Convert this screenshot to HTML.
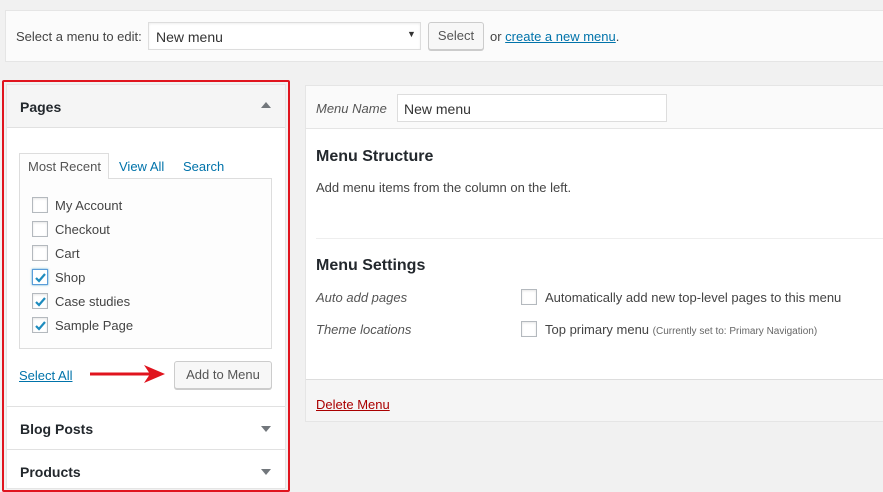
<!DOCTYPE html>
<html><head><style>
*{box-sizing:border-box;margin:0;padding:0}
body{width:883px;height:492px;background:#f1f1f1;font-family:"Liberation Sans",sans-serif;font-size:13px;color:#444;position:relative;overflow:hidden}
.a{position:absolute}
.cb{position:absolute;width:16px;height:16px;border:1px solid #b4b9be;background:#fff;box-shadow:inset 0 1px 2px rgba(0,0,0,.1)}
.cb svg{position:absolute;left:1px;top:1px}
.lbl{position:absolute;font-size:13px;color:#444}
a{color:#0073aa}
</style></head><body>
<div class="a" style="left:5px;top:10px;width:880px;height:52px;background:#fbfbfb;border:1px solid #e5e5e5"></div>
<div class="a" style="left:16px;top:29px">Select a menu to edit:</div>
<div class="a" style="left:148px;top:22px;width:273px;height:28px;background:#fff;border:1px solid #ddd;box-shadow:inset 0 1px 2px rgba(0,0,0,.07)"><span class="a" style="left:7px;top:6px;font-size:14px;color:#333">New menu</span><span class="a" style="left:258px;top:6px;font-size:9px;color:#333">▼</span></div>
<div class="a" style="left:428px;top:22px;width:56px;height:28px;background:#f7f7f7;border:1px solid #ccc;border-radius:3px;box-shadow:0 1px 0 #ccc;text-align:center;line-height:26px;color:#555">Select</div>
<div class="a" style="left:490px;top:29px">or <a href="#">create a new menu</a>.</div>

<div class="a" style="left:2px;top:80px;width:288px;height:412px;border:2px solid #e0141e;border-radius:2px"></div>
<div class="a" style="left:6px;top:84px;width:280px;height:405px;background:#fff;border:1px solid #e5e5e5"></div>
<div class="a" style="left:7px;top:85px;width:278px;height:43px;background:#f5f5f5;border-bottom:1px solid #e1e1e1"></div>
<div class="a" style="left:20px;top:99px;font-size:14px;font-weight:bold;color:#23282d">Pages</div>
<div class="a" style="left:261px;top:102px;width:0;height:0;border-left:5px solid transparent;border-right:5px solid transparent;border-bottom:6px solid #72777c"></div>

<div class="a" style="left:19px;top:178px;width:253px;height:171px;border:1px solid #ddd;background:#fdfdfd"></div>
<div class="a" style="left:19px;top:153px;width:90px;height:26px;border:1px solid #ddd;border-bottom:none;background:#fdfdfd"></div>
<div class="a" style="left:28px;top:159px;color:#555">Most Recent</div>
<div class="a" style="left:119px;top:159px;color:#0073aa">View All</div>
<div class="a" style="left:183px;top:159px;color:#0073aa">Search</div>

<div class="cb" style="left:32px;top:197px"></div><div class="lbl" style="left:55px;top:198px">My Account</div>
<div class="cb" style="left:32px;top:221px"></div><div class="lbl" style="left:55px;top:222px">Checkout</div>
<div class="cb" style="left:32px;top:245px"></div><div class="lbl" style="left:55px;top:246px">Cart</div>
<div class="cb" style="left:32px;top:269px;border-color:#5b9dd9;box-shadow:0 0 2px rgba(30,140,190,.8)"><svg width="13" height="13" viewBox="0 0 13 13"><path d="M2 7l3 3 6-7" stroke="#1e8cbe" stroke-width="2.2" fill="none"/></svg></div><div class="lbl" style="left:55px;top:270px">Shop</div>
<div class="cb" style="left:32px;top:293px"><svg width="13" height="13" viewBox="0 0 13 13"><path d="M2 7l3 3 6-7" stroke="#1e8cbe" stroke-width="2.2" fill="none"/></svg></div><div class="lbl" style="left:55px;top:294px">Case studies</div>
<div class="cb" style="left:32px;top:317px"><svg width="13" height="13" viewBox="0 0 13 13"><path d="M2 7l3 3 6-7" stroke="#1e8cbe" stroke-width="2.2" fill="none"/></svg></div><div class="lbl" style="left:55px;top:318px">Sample Page</div>

<div class="a" style="left:19px;top:368px"><a href="#">Select All</a></div>
<svg class="a" style="left:88px;top:364px" width="80" height="20"><line x1="2" y1="10" x2="62" y2="10" stroke="#e0141e" stroke-width="3"/><path d="M56 1L77 10L56 19L62 10Z" fill="#e0141e"/></svg>
<div class="a" style="left:174px;top:361px;width:98px;height:28px;background:#f7f7f7;border:1px solid #ccc;border-radius:3px;box-shadow:0 1px 0 #ccc;text-align:center;line-height:26px;color:#555">Add to Menu</div>

<div class="a" style="left:7px;top:406px;width:278px;border-top:1px solid #e1e1e1"></div>
<div class="a" style="left:20px;top:421px;font-size:14px;font-weight:bold;color:#23282d">Blog Posts</div>
<div class="a" style="left:261px;top:426px;border-left:5px solid transparent;border-right:5px solid transparent;border-top:6px solid #72777c"></div>
<div class="a" style="left:7px;top:449px;width:278px;border-top:1px solid #e1e1e1"></div>
<div class="a" style="left:20px;top:464px;font-size:14px;font-weight:bold;color:#23282d">Products</div>
<div class="a" style="left:261px;top:469px;border-left:5px solid transparent;border-right:5px solid transparent;border-top:6px solid #72777c"></div>

<div class="a" style="left:305px;top:85px;width:580px;height:337px;background:#fff;border:1px solid #e5e5e5"></div>
<div class="a" style="left:306px;top:86px;width:579px;height:43px;background:#fafafa;border-bottom:1px solid #e5e5e5"></div>
<div class="a" style="left:316px;top:101px;font-style:italic;color:#555">Menu Name</div>
<div class="a" style="left:397px;top:94px;width:270px;height:28px;background:#fff;border:1px solid #ddd"><span class="a" style="left:6px;top:6px;font-size:14px;color:#333">New menu</span></div>
<div class="a" style="left:316px;top:148px;font-size:16px;font-weight:bold;color:#23282d">Menu Structure</div>
<div class="a" style="left:316px;top:180px">Add menu items from the column on the left.</div>
<div class="a" style="left:316px;top:238px;width:570px;border-top:1px solid #eee"></div>
<div class="a" style="left:316px;top:257px;font-size:16px;font-weight:bold;color:#23282d">Menu Settings</div>
<div class="a" style="left:316px;top:290px;font-style:italic;color:#555">Auto add pages</div>
<div class="cb" style="left:521px;top:289px"></div><div class="lbl" style="left:545px;top:290px">Automatically add new top-level pages to this menu</div>
<div class="a" style="left:316px;top:322px;font-style:italic;color:#555">Theme locations</div>
<div class="cb" style="left:521px;top:321px"></div><div class="lbl" style="left:545px;top:322px">Top primary menu <span style="font-size:10px;color:#666">(Currently set to: Primary Navigation)</span></div>
<div class="a" style="left:306px;top:379px;width:579px;height:42px;background:#f5f5f5;border-top:1px solid #ddd"></div>
<div class="a" style="left:316px;top:397px"><a href="#" style="color:#a00">Delete Menu</a></div>
</body></html>
